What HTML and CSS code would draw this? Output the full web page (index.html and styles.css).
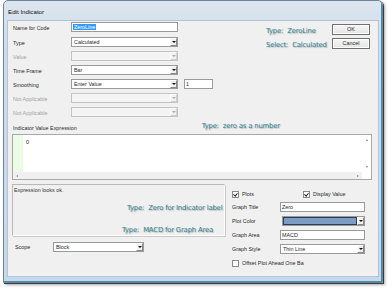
FILE: index.html
```html
<!DOCTYPE html>
<html>
<head>
<meta charset="utf-8">
<link rel="stylesheet" href="styles.css">
</head>
<body>
<div class="window">
  <div class="titlebar">Edit Indicator</div>
  <div class="client">
    <div class="top">
      <div class="form">
        <div class="lbl">Name for Code</div>
        <div class="field text"><span class="hl">ZeroLine</span></div>
        <div></div>

        <div class="lbl">Type</div>
        <div class="field combo"><span class="val">Calculated</span><span class="arrow"></span></div>
        <div></div>

        <div class="lbl dis">Value</div>
        <div class="field combo disabled"><span class="val"></span><span class="arrow"></span></div>
        <div></div>

        <div class="lbl">Time Frame</div>
        <div class="field combo"><span class="val">Bar</span><span class="arrow"></span></div>
        <div></div>

        <div class="lbl">Smoothing</div>
        <div class="field combo"><span class="val">Enter Value</span><span class="arrow"></span></div>
        <div class="field text small">1</div>

        <div class="lbl dis">Not Applicable</div>
        <div class="field combo disabled"><span class="val"></span><span class="arrow"></span></div>
        <div></div>

        <div class="lbl dis">Not Applicable</div>
        <div class="field combo disabled"><span class="val"></span><span class="arrow"></span></div>
        <div></div>
      </div>
      <div class="notes">
        <div class="note">Type:&nbsp; ZeroLine</div>
        <div class="note">Select:&nbsp; Calculated</div>
      </div>
      <div class="buttons">
        <div class="btn">OK</div>
        <div class="btn">Cancel</div>
      </div>
    </div>

    <div class="expr-head">
      <div class="lbl">Indicator Value Expression</div>
      <div class="note expr-note">Type:&nbsp; zero as a number</div>
    </div>
    <div class="expr">
      <div class="expr-main">
        <div class="gutter"></div>
        <div class="code">0</div>
        <div class="vscroll"><span class="up"></span><span class="down"></span></div>
      </div>
      <div class="hscroll"><span class="left"></span><span class="right"></span><span class="corner"></span></div>
    </div>

    <div class="bottom">
      <div class="leftcol">
        <div class="status">
          <div class="status-text">Expression looks ok.</div>
          <div class="note note-zero">Type:&nbsp; Zero for Indicator label</div>
          <div class="note note-macd">Type:&nbsp; MACD for Graph Area</div>
        </div>
        <div class="scope">
          <div class="lbl scope-lbl">Scope</div>
          <div class="field combo scope-combo"><span class="val">Block</span><span class="arrow"></span></div>
        </div>
      </div>
      <div class="rightcol">
        <div class="checks">
          <div class="check"><span class="box on"></span>Plots</div>
          <div class="check"><span class="box on"></span>Display Value</div>
        </div>
        <div class="pgrid">
          <div class="lbl">Graph Title</div>
          <div class="field text">Zero</div>
          <div class="lbl">Plot Color</div>
          <div class="field color"><span class="swatch"></span><span class="arrow"></span></div>
          <div class="lbl">Graph Area</div>
          <div class="field text">MACD</div>
          <div class="lbl">Graph Style</div>
          <div class="field combo"><span class="val">Thin Line</span><span class="arrow"></span></div>
        </div>
        <div class="check offset"><span class="box"></span>Offset Plot Ahead One Ba</div>
      </div>
    </div>
  </div>
</div>
</body>
</html>
```

FILE: styles.css
```css
html, body {
  margin: 0;
  padding: 0;
  background: #ffffff;
}
body {
  font-family: "Liberation Sans", Arial, sans-serif;
  font-size: 5.4px;
  color: #2a2a2a;
  width: 392px;
  height: 289px;
  overflow: hidden;
}
.window {
  margin-left: 3px;
  width: 380px;
  height: 283px;
  box-sizing: border-box;
  border: 1px solid #6e8499;
  border-radius: 5px 5px 0 0;
  background: linear-gradient(#dde6ef, #cfdcea 40px, #c9d8e8);
  padding: 0 3px 5px 3px;
  display: flex;
  flex-direction: column;
  box-shadow: inset -1px -1px 0 #3a90bd, 1px 1px 0 #3b3b3b, 2px 2px 3px rgba(0,0,0,0.35);
}
.titlebar {
  height: 19px;
  line-height: 22px;
  padding-left: 1px;
  font-size: 6.2px;
  color: #111;
  flex: none;
}
.client {
  flex: 1;
  background: #f0f0f0;
  border: 1px solid #b5c4d3;
  box-sizing: border-box;
  padding-top: 1px;
}
.lbl {
  line-height: 10px;
  white-space: nowrap;
}
.lbl.dis { color: #a3a3a3; }

/* top section */
.top {
  display: flex;
  align-items: flex-start;
}
.form {
  display: grid;
  grid-template-columns: 52px 107px 29px;
  grid-template-rows: 15px repeat(6, 14px);
  column-gap: 6px;
  padding-left: 5px;
  align-items: start;
}
.form .lbl { margin-top: 1px; }
.field {
  height: 10px;
  box-sizing: border-box;
  border: 1px solid #9a9a9a;
  background: #ffffff;
  line-height: 8px;
  white-space: nowrap;
  overflow: hidden;
}
.form > .field:first-of-type { height: 11px; line-height: 9px; }
.text { padding-left: 1px; }
.hl {
  background: #3399ff;
  color: #ffffff;
  padding: 0 1px;
}
.combo {
  display: flex;
  align-items: stretch;
}
.combo .val {
  flex: 1;
  padding-left: 2px;
}
.arrow {
  width: 7px;
  flex: none;
  margin: 0;
  background: #f0f0f0;
  border-left: 1px solid #ffffff;
  border-top: 1px solid #ffffff;
  border-right: 1px solid #8a8a8a;
  border-bottom: 1px solid #8a8a8a;
  box-sizing: border-box;
  display: flex;
  align-items: center;
  justify-content: center;
}
.arrow::after {
  content: "";
  border-left: 2px solid transparent;
  border-right: 2px solid transparent;
  border-top: 2px solid #111;
}
.disabled {
  background: #f4f4f4;
  border-color: #c4c4c4;
}
.disabled .arrow::after { border-top-color: #b0b0b0; }
.disabled .arrow { border-right-color: #d0d0d0; border-bottom-color: #d0d0d0; }

.notes {
  margin-left: 53px;
  padding-top: 2px;
}
.note {
  font-family: "DejaVu Sans", "Liberation Sans", sans-serif;
  font-size: 6.9px;
  letter-spacing: -0.2px;
  color: #2f7f8e;
  line-height: 14px;
  white-space: nowrap;
  text-shadow: 1px 1px 1px rgba(0,0,0,0.25);
}
.buttons {
  margin-left: auto;
  margin-right: 8px;
  padding-top: 2px;
  display: flex;
  flex-direction: column;
  gap: 3px;
}
.btn {
  width: 38px;
  height: 11px;
  box-sizing: border-box;
  border: 1px solid #707070;
  background: linear-gradient(#f6f6f6, #e4e4e4);
  text-align: center;
  line-height: 9px;
  font-size: 5.4px;
  box-shadow: inset 0 0 0 1px #ffffff;
}

/* expression */
.expr-head {
  display: flex;
  align-items: center;
  padding-left: 5px;
  margin-top: 2px;
  height: 10px;
}
.expr-note {
  margin-left: 125px;
  margin-top: -4px;
  line-height: 10px;
}
.expr {
  margin: 1px 6px 0 4px;
  height: 46px;
  border: 1px solid #a8a8a8;
  box-sizing: border-box;
  background: #ffffff;
  display: flex;
  flex-direction: column;
}
.expr-main {
  flex: 1;
  display: flex;
}
.gutter {
  width: 10px;
  background: #eafbe6;
}
.code {
  flex: 1;
  padding: 3px 0 0 3px;
  line-height: 8px;
}
.vscroll {
  width: 9px;
  display: flex;
  flex-direction: column;
  justify-content: space-between;
  align-items: center;
  padding: 4px 0 4px;
}
.up, .down, .left, .right {
  display: block;
  width: 0;
  height: 0;
}
.up {
  border-left: 1.5px solid transparent;
  border-right: 1.5px solid transparent;
  border-bottom: 2px solid #888;
}
.down {
  border-left: 1.5px solid transparent;
  border-right: 1.5px solid transparent;
  border-top: 2px solid #888;
}
.hscroll {
  height: 7px;
  background: #f0f0f0;
  display: flex;
  align-items: center;
  padding-left: 3px;
}
.left {
  border-top: 1.5px solid transparent;
  border-bottom: 1.5px solid transparent;
  border-right: 2px solid #888;
}
.right {
  margin-left: auto;
  border-top: 1.5px solid transparent;
  border-bottom: 1.5px solid transparent;
  border-left: 2px solid #888;
}
.corner {
  width: 9px;
  margin-left: 3px;
  height: 7px;
  background: #ffffff;
}

/* bottom */
.bottom {
  display: flex;
  margin-top: 4px;
}
.leftcol {
  width: 213px;
  margin-left: 4px;
}
.status {
  height: 52px;
  box-sizing: border-box;
  border: 1px solid #b8b8b8;
  border-right-color: #ffffff;
  border-bottom-color: #ffffff;
  box-shadow: 1px 1px 0 #c8c8c8;
  padding: 1px 0 0 1px;
}
.status-text {
  line-height: 8px;
  color: #333;
}
.note-zero {
  margin-left: 113px;
  margin-top: 7px;
  line-height: 14px;
}
.note-macd {
  margin-left: 108px;
  margin-top: 9px;
  line-height: 12px;
}
.scope {
  display: flex;
  align-items: center;
  margin-top: 6px;
}
.scope-lbl {
  width: 38px;
  padding-left: 3px;
}
.scope-combo {
  width: 91px;
}
.rightcol {
  width: 133px;
  margin-left: 7px;
  padding-top: 4px;
}
.checks {
  display: flex;
  height: 12px;
  align-items: center;
}
.checks .check:first-child { width: 71px; }
.check {
  display: flex;
  align-items: center;
  white-space: nowrap;
  line-height: 8px;
}
.box {
  width: 5px;
  height: 5px;
  border: 1px solid #8a8a8a;
  background: #ffffff;
  margin-right: 3px;
  position: relative;
}
.box.on::after {
  content: "";
  position: absolute;
  left: 1px;
  top: 0px;
  width: 1.5px;
  height: 3px;
  border-right: 1px solid #222;
  border-bottom: 1px solid #222;
  transform: rotate(40deg);
}
.pgrid {
  display: grid;
  grid-template-columns: 48px 85px;
  grid-template-rows: 10px 10px 10px 10px;
  row-gap: 4px;
  margin-top: 2px;
  align-items: center;
}
.color {
  display: flex;
  margin-left: 2px;
  background: #ffffff;
}
.swatch {
  flex: 1;
  background: #7d9bc3;
  border: 1px solid #2c3d55;
  margin: 0;
}
.offset {
  margin-top: 4px;
  height: 10px;
}
```
